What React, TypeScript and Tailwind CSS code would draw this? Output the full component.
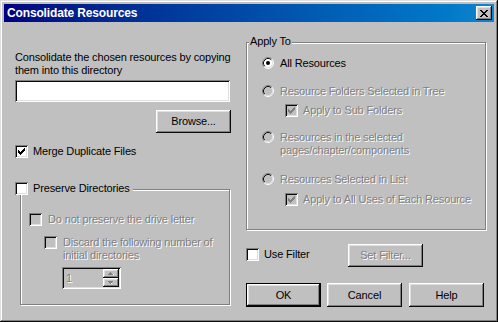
import React from 'react'

const sunken = 'shadow-[inset_1px_1px_#808080,inset_-1px_-1px_#ffffff,inset_2px_2px_#0a0a0a,inset_-2px_-2px_#dfdfdf]'
const raised = 'shadow-[inset_-1px_-1px_#0a0a0a,inset_1px_1px_#ffffff,inset_-2px_-2px_#808080,inset_2px_2px_#dfdfdf]'
const etched = 'border border-[#808080] shadow-[inset_1px_1px_#ffffff,1px_1px_#ffffff]'
const dim = 'text-[#808080] [text-shadow:1px_1px_0_#ffffff]'

function CheckBox({ checked = false, disabled = false }: { checked?: boolean; disabled?: boolean }) {
  return (
    <span
      className={`flex h-[13px] w-[13px] shrink-0 items-center justify-center ${sunken} ${
        disabled ? 'bg-[#c0c0c0]' : 'bg-white'
      }`}
    >
      {checked && (
        <svg width="7" height="7" viewBox="0 0 7 7" shapeRendering="crispEdges">
          {[2, 3, 4, 3, 2, 1, 0].map((y, x) => (
            <rect key={x} x={x} y={y} width="1" height="3" fill={disabled ? '#808080' : '#000000'} />
          ))}
        </svg>
      )}
    </span>
  )
}

function Radio({ checked = false, disabled = false }: { checked?: boolean; disabled?: boolean }) {
  return (
    <svg width="12" height="12" viewBox="0 0 12 12" className="shrink-0">
      <circle cx="6" cy="6" r="5" fill={disabled ? '#c0c0c0' : '#ffffff'} />
      <path d="M2.11 9.89 A5.5 5.5 0 0 1 9.89 2.11" fill="none" stroke="#808080" strokeWidth="1" />
      <path d="M9.89 2.11 A5.5 5.5 0 0 1 2.11 9.89" fill="none" stroke="#ffffff" strokeWidth="1" />
      <path d="M2.82 9.18 A4.5 4.5 0 0 1 9.18 2.82" fill="none" stroke="#0a0a0a" strokeWidth="1" />
      <path d="M9.18 2.82 A4.5 4.5 0 0 1 2.82 9.18" fill="none" stroke="#dfdfdf" strokeWidth="1" />
      {checked && <circle cx="6" cy="6" r="2" fill={disabled ? '#808080' : '#000000'} />}
    </svg>
  )
}

function Button({ label, disabled = false, isDefault = false, h = 'h-[23px]' }: { label: string; disabled?: boolean; isDefault?: boolean; h?: string }) {
  return (
    <div
      className={`flex w-[75px] ${h} items-center justify-center bg-[#c0c0c0] ${raised} ${
        isDefault ? 'border border-black' : ''
      } ${disabled ? dim : 'text-black'}`}
    >
      {label}
    </div>
  )
}

function Arrow({ up }: { up?: boolean }) {
  return (
    <svg width="6" height="4" viewBox="0 0 6 4" shapeRendering="crispEdges">
      {up ? (
        <>
          <rect x="2" y="0" width="1" height="1" fill="#808080" />
          <rect x="1" y="1" width="3" height="1" fill="#808080" />
          <rect x="1" y="2" width="5" height="1" fill="#ffffff" />
          <rect x="0" y="2" width="5" height="1" fill="#808080" />
        </>
      ) : (
        <>
          <rect x="0" y="0" width="5" height="1" fill="#808080" />
          <rect x="1" y="1" width="3" height="1" fill="#808080" />
          <rect x="2" y="2" width="1" height="1" fill="#808080" />
          <rect x="3" y="2" width="1" height="1" fill="#ffffff" />
        </>
      )}
    </svg>
  )
}

export default function App() {
  return (
    <div
      className={`flex h-[322px] w-[498px] flex-col overflow-hidden bg-[#c0c0c0] p-[4px] font-['Liberation_Sans',Arial,sans-serif] text-[11px] leading-[13px] tracking-[-0.15px] whitespace-nowrap text-black shadow-[inset_-1px_-1px_#0a0a0a,inset_1px_1px_#dfdfdf,inset_-2px_-2px_#808080,inset_2px_2px_#ffffff]`}
    >
      {/* Title bar */}
      <div className="flex h-[18px] shrink-0 items-center justify-between bg-linear-to-r from-[#000080] to-[#1084d0] pl-[3px] pr-[2px]">
        <span className="text-[12px] font-bold text-white">Consolidate Resources</span>
        <div className={`flex h-[14px] w-[16px] items-center justify-center bg-[#c0c0c0] ${raised}`}>
          <svg width="8" height="7" viewBox="0 0 8 7" shapeRendering="crispEdges">
            <path d="M0 0h2v1h-2zM6 0h2v1h-2zM1 1h2v1h-2zM5 1h2v1h-2zM2 2h4v1h-4zM3 3h2v1h-2zM2 4h4v1h-4zM1 5h2v1h-2zM5 5h2v1h-2zM0 6h2v1h-2zM6 6h2v1h-2z" fill="#000" />
          </svg>
        </div>
      </div>

      <div className="flex pl-[11px]">
        {/* Left column */}
        <div className="flex w-[216px] flex-col pt-[29px]">
          <p>
            Consolidate the chosen resources by copying
            <br />
            them into this directory
          </p>
          <div className={`mt-[3px] h-[22px] w-[215px] bg-white ${sunken}`} />
          <div className="mt-[8px] flex justify-end">
            <Button label="Browse..." />
          </div>
          <div className="mt-[12px] flex items-start gap-[5px]">
            <CheckBox checked />
            <span>Merge Duplicate Files</span>
          </div>

          <div className={`relative ml-[5px] mt-[31px] h-[116px] w-[210px] ${etched} pl-[8px] pt-[23px]`}>
            <div className="absolute -left-[6px] -top-[8px] flex items-start gap-[5px] bg-[#c0c0c0] pr-[3px]">
              <CheckBox />
              <span>Preserve Directories</span>
            </div>
            <div className="flex items-start gap-[6px]">
              <CheckBox disabled />
              <span className={dim}>Do not preserve the drive letter</span>
            </div>
            <div className="ml-[15px] mt-[10px] flex items-start gap-[6px]">
              <CheckBox disabled />
              <span className={dim}>
                Discard the following number of
                <br />
                initial directories
              </span>
            </div>
            <div className={`ml-[33px] mt-[5px] flex h-[22px] w-[59px] bg-[#c0c0c0] p-[2px] ${sunken}`}>
              <span className={`flex-1 pl-[2px] pt-[3px] ${dim}`}>1</span>
              <div className="flex w-[16px] flex-col">
                <div className={`flex h-[9px] items-center justify-center ${raised}`}>
                  <Arrow up />
                </div>
                <div className={`flex h-[9px] items-center justify-center ${raised}`}>
                  <Arrow />
                </div>
              </div>
            </div>
          </div>
        </div>

        {/* Right column */}
        <div className="ml-[15px] flex w-[240px] flex-col pt-[20px]">
          <div className={`relative h-[188px] w-[240px] ${etched} pl-[15px] pt-[14px]`}>
            <span className="absolute -top-[8px] left-[2px] bg-[#c0c0c0] px-[1px]">Apply To</span>
            <div className="flex items-start gap-[6px]">
              <Radio checked />
              <span>All Resources</span>
            </div>
            <div className="mt-[15px] flex items-start gap-[6px]">
              <Radio disabled />
              <span className={dim}>Resource Folders Selected in Tree</span>
            </div>
            <div className="ml-[23px] mt-[6px] flex items-start gap-[5px]">
              <CheckBox checked disabled />
              <span className={dim}>Apply to Sub Folders</span>
            </div>
            <div className="mt-[14px] flex items-start gap-[6px]">
              <Radio disabled />
              <span className={dim}>
                Resources in the selected
                <br />
                pages/chapter/components
              </span>
            </div>
            <div className="mt-[16px] flex items-start gap-[6px]">
              <Radio disabled />
              <span className={dim}>Resources Selected in List</span>
            </div>
            <div className="ml-[23px] mt-[7px] flex items-start gap-[5px]">
              <CheckBox checked disabled />
              <span className={dim}>Apply to All Uses of Each Resource</span>
            </div>
          </div>

          <div className="mt-[14px] flex items-start">
            <div className="mt-[4px] flex w-[102px] items-start gap-[5px]">
              <CheckBox />
              <span>Use Filter</span>
            </div>
            <Button label="Set Filter..." disabled />
          </div>

          <div className="mt-[16px] flex">
            <Button label="OK" isDefault h="h-[24px]" />
            <div className="ml-[6px]">
              <Button label="Cancel" h="h-[24px]" />
            </div>
            <div className="ml-[7px]">
              <Button label="Help" h="h-[24px]" />
            </div>
          </div>
        </div>
      </div>
    </div>
  )
}
